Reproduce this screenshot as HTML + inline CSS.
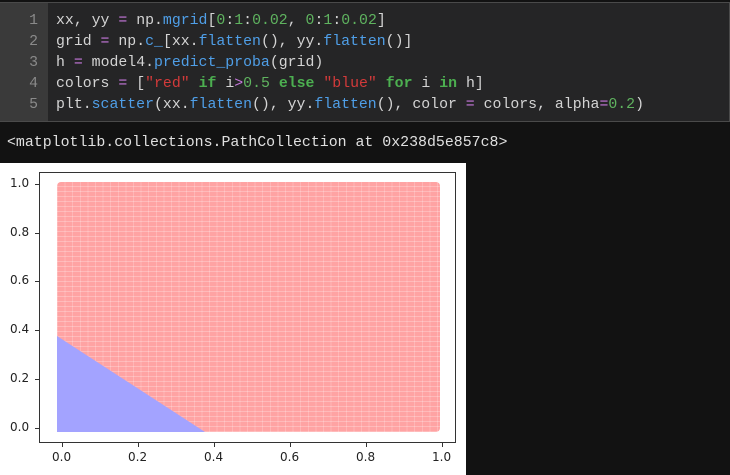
<!DOCTYPE html>
<html><head><style>
body{margin:0;width:730px;height:475px;background:#121212;overflow:hidden;font-family:"Liberation Mono",monospace;position:relative}
.cell{position:absolute;left:0;top:2px;width:729px;height:118px;border:1px solid #4a4a4a;border-left:none;background:#252526}
.gut{position:absolute;left:0;top:0;width:48px;height:118px;background:#3a3a3a}
.ln{position:absolute;left:0;width:38px;text-align:right;color:#8a8a8a;font-size:14.8px}
.code{position:absolute;left:56px;color:#d4d4d4;font-size:14.85px;white-space:pre}
.p{color:#c678dd}.f{color:#4f9fe8}.n{color:#5fb35f}.s{color:#d33a3a}.k{color:#4caf50;font-weight:bold}
.out{position:absolute;left:7px;top:135px;color:#e0e0e0;font-size:14.9px;white-space:pre}
.img{position:absolute;left:0;top:163px;width:466px;height:312px;background:#fff}
.ax{position:absolute;left:39px;top:9px;width:417px;height:271px;border:1px solid #333;box-sizing:border-box}
.red{position:absolute;left:57px;top:182px;width:383px;height:250px;background:#ffa3a3;
background-image:repeating-linear-gradient(0deg,rgba(255,255,255,.25) 0 1px,transparent 1px 5px),repeating-linear-gradient(90deg,rgba(255,255,255,.2) 0 1px,transparent 1px 7.6px);border-radius:4px}
.tl{position:absolute;font-family:"DejaVu Sans",sans-serif;font-size:12px;color:#222}
.tk{position:absolute;background:#333}
</style></head><body>
<div class="cell"><div class="gut"></div>
<div class="ln" style="top:10px">1</div><div class="ln" style="top:31px">2</div><div class="ln" style="top:52px">3</div><div class="ln" style="top:73px">4</div><div class="ln" style="top:94px">5</div>
<div class="code" style="top:10px">xx, yy <span class="p">=</span> np.<span class="f">mgrid</span>[<span class="n">0</span>:<span class="n">1</span>:<span class="n">0.02</span>, <span class="n">0</span>:<span class="n">1</span>:<span class="n">0.02</span>]</div>
<div class="code" style="top:31px">grid <span class="p">=</span> np.<span class="f">c_</span>[xx.<span class="f">flatten</span>(), yy.<span class="f">flatten</span>()]</div>
<div class="code" style="top:52px">h <span class="p">=</span> model4.<span class="f">predict_proba</span>(grid)</div>
<div class="code" style="top:73px">colors <span class="p">=</span> [<span class="s">"red"</span> <span class="k">if</span> i<span class="p">&gt;</span><span class="n">0.5</span> <span class="k">else</span> <span class="s">"blue"</span> <span class="k">for</span> i <span class="k">in</span> h]</div>
<div class="code" style="top:94px">plt.<span class="f">scatter</span>(xx.<span class="f">flatten</span>(), yy.<span class="f">flatten</span>(), color <span class="p">=</span> colors, alpha<span class="p">=</span><span class="n">0.2</span>)</div>
</div>
<div class="out">&lt;matplotlib.collections.PathCollection at 0x238d5e857c8&gt;</div>
<div class="img"><div class="ax"></div></div>
<div class="red"></div>
<svg style="position:absolute;left:0;top:0" width="730" height="475"><polygon points="57,336 57,432 205,432" fill="#a3a3ff"/></svg>
<div class="tk" style="left:35px;top:184px;width:4px;height:1px"></div><div class="tl" style="left:10px;top:176px">1.0</div>
<div class="tk" style="left:35px;top:233px;width:4px;height:1px"></div><div class="tl" style="left:10px;top:225px">0.8</div>
<div class="tk" style="left:35px;top:281px;width:4px;height:1px"></div><div class="tl" style="left:10px;top:273px">0.6</div>
<div class="tk" style="left:35px;top:330px;width:4px;height:1px"></div><div class="tl" style="left:10px;top:322px">0.4</div>
<div class="tk" style="left:35px;top:379px;width:4px;height:1px"></div><div class="tl" style="left:10px;top:371px">0.2</div>
<div class="tk" style="left:35px;top:428px;width:4px;height:1px"></div><div class="tl" style="left:10px;top:420px">0.0</div>
<div class="tk" style="left:62px;top:443px;width:1px;height:4px"></div><div class="tl" style="left:52px;top:450px">0.0</div>
<div class="tk" style="left:138px;top:443px;width:1px;height:4px"></div><div class="tl" style="left:128px;top:450px">0.2</div>
<div class="tk" style="left:214px;top:443px;width:1px;height:4px"></div><div class="tl" style="left:204px;top:450px">0.4</div>
<div class="tk" style="left:290px;top:443px;width:1px;height:4px"></div><div class="tl" style="left:280px;top:450px">0.6</div>
<div class="tk" style="left:366px;top:443px;width:1px;height:4px"></div><div class="tl" style="left:356px;top:450px">0.8</div>
<div class="tk" style="left:442px;top:443px;width:1px;height:4px"></div><div class="tl" style="left:432px;top:450px">1.0</div>
</body></html>
